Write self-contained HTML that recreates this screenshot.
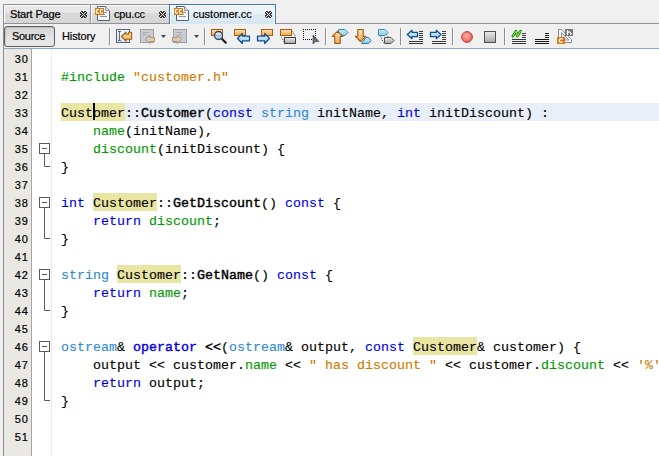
<!DOCTYPE html>
<html><head><meta charset="utf-8">
<style>
*{margin:0;padding:0;box-sizing:border-box}
html,body{width:659px;height:456px;overflow:hidden;background:#f0f0f0;position:relative;font-family:"Liberation Sans",sans-serif}
.abs{position:absolute}
.tab{position:absolute;top:4px;height:20px;border:1px solid #8f9399;border-bottom:1px solid #8f9399;background:linear-gradient(#e9e9e9 0,#e6e6e6 8px,#d9d9d9 8px,#d6d6d6 100%);box-shadow:inset 1px 1px 0 #fff}
.tab .t{position:absolute;top:3px;font-size:11px;color:#000;white-space:nowrap;-webkit-text-stroke:0.2px #000}
.act{border-color:#3b79b6;border-bottom:none;background:linear-gradient(#f0f7fb 0,#eaf3f9 9px,#dcebf4 9px,#d8e8f2 100%);box-shadow:inset 1px 1px 0 #fff,inset -1px 0 0 #fff}
.close{position:absolute;top:7px}
#editor{position:absolute;left:3px;top:48px;width:656px;height:408px;background:#fff;border-left:1px solid #8c8c8c;border-top:1px solid #8aa6c4}
#gutter{position:absolute;left:0;top:0;width:28px;height:408px;background:#e9e8e2;border-right:1px solid #a5a5a5}
.ln{position:absolute;left:0;width:25px;letter-spacing:1px;padding-top:1px;-webkit-text-stroke:0.2px #000;text-align:right;font-family:"Liberation Sans",sans-serif;font-size:11px;line-height:18px;color:#000}
#code{position:absolute;left:57px;top:2px;-webkit-text-stroke:0.12px currentColor;font-family:"Liberation Mono",monospace;font-size:13.333px;line-height:18px;white-space:pre;color:#000}
.row{position:absolute;left:0;height:18px;white-space:pre}
.kw{color:#0000e6}
.ty{color:#2f8ad6}
.gr{color:#009900}
.st{color:#ce7b00}
.b{font-weight:normal;-webkit-text-stroke:0.4px currentColor}
.hl{background:#e9e6a4;display:inline-block;height:18px;padding-top:2px;margin-top:-2px;vertical-align:top}
.sep{position:absolute;top:28px;width:1px;height:17px;background:#8d8d8d;box-shadow:1px 0 0 #fff}
</style></head><body>
<!-- tabs -->
<div class="tab" style="left:3px;width:88px">
  <div class="t" style="left:6px;letter-spacing:-0.15px">Start Page</div>
</div>
<div class="tab" style="left:90px;width:80px;border-right:none;box-shadow:inset 1px 1px 0 #fff,inset -1px 0 0 #fff">
  <div class="t" style="left:23px;letter-spacing:-0.15px">cpu.cc</div>
</div>
<div class="tab act" style="left:169px;width:107px;height:20px">
  <div class="t" style="left:23px">customer.cc</div>
</div>
<div class="abs" style="left:276px;top:23px;width:383px;height:1px;background:#8f9399"></div>

<!-- toolbar -->
<div class="abs" style="left:3px;top:24px;width:1px;height:24px;background:#8c8c8c"></div>
<div class="abs" style="left:4px;top:26px;width:51px;height:21px;border:1px solid #5e5e5e;border-radius:3px;background:linear-gradient(#d4d4d4,#e4e4e4 60%,#e8e8e8);box-shadow:inset 1px 1px 1px rgba(0,0,0,0.12)"></div>
<div class="abs" style="left:12px;top:30px;font-size:11px;letter-spacing:-0.3px;-webkit-text-stroke:0.2px #000">Source</div>
<div class="abs" style="left:62px;top:30px;font-size:11px;letter-spacing:-0.1px;-webkit-text-stroke:0.2px #000">History</div>
<div class="sep" style="left:109px"></div>
<div class="sep" style="left:204px"></div>
<div class="sep" style="left:325px"></div>
<div class="sep" style="left:400px"></div>
<div class="sep" style="left:452px"></div>
<div class="sep" style="left:504px"></div>

<svg class="abs" style="left:0;top:0;z-index:3" width="659" height="48" viewBox="0 0 659 48">
<defs>
<linearGradient id="gOr" x1="0" y1="0" x2="0" y2="1"><stop offset="0" stop-color="#fde3b8"/><stop offset="1" stop-color="#f2a64e"/></linearGradient>
<linearGradient id="gBl" x1="0" y1="0" x2="0" y2="1"><stop offset="0" stop-color="#e6f4fd"/><stop offset="1" stop-color="#8cc6ee"/></linearGradient>
<linearGradient id="gTag" x1="0" y1="0" x2="0" y2="1"><stop offset="0" stop-color="#c8ecf8"/><stop offset="1" stop-color="#88cce6"/></linearGradient>
<linearGradient id="gGr" x1="0" y1="0" x2="0" y2="1"><stop offset="0" stop-color="#ececec"/><stop offset="1" stop-color="#a6a6a6"/></linearGradient>
<linearGradient id="gBox" x1="0" y1="0" x2="0" y2="1"><stop offset="0" stop-color="#eef4fb"/><stop offset="1" stop-color="#d4e2f1"/></linearGradient>
<radialGradient id="gRed" cx="0.45" cy="0.4" r="0.6"><stop offset="0" stop-color="#ffb0a8"/><stop offset="1" stop-color="#ee5e56"/></radialGradient>
</defs>
<!-- tab close icons -->
<g shape-rendering="crispEdges"><path d="M81 11h1v1h-1zM82 11h1v1h-1zM84 11h1v1h-1zM85 11h1v1h-1zM80 12h1v1h-1zM82 12h1v1h-1zM83 12h1v1h-1zM84 12h1v1h-1zM86 12h1v1h-1zM80 13h1v1h-1zM81 13h1v1h-1zM83 13h1v1h-1zM85 13h1v1h-1zM86 13h1v1h-1zM81 14h1v1h-1zM82 14h1v1h-1zM84 14h1v1h-1zM85 14h1v1h-1zM80 15h1v1h-1zM81 15h1v1h-1zM83 15h1v1h-1zM85 15h1v1h-1zM86 15h1v1h-1zM80 16h1v1h-1zM82 16h1v1h-1zM83 16h1v1h-1zM84 16h1v1h-1zM86 16h1v1h-1zM81 17h1v1h-1zM82 17h1v1h-1zM84 17h1v1h-1zM85 17h1v1h-1z" fill="#383838"/><path d="M81 12h1v1h-1zM85 12h1v1h-1zM82 13h1v1h-1zM84 13h1v1h-1zM83 14h1v1h-1zM82 15h1v1h-1zM84 15h1v1h-1zM81 16h1v1h-1zM85 16h1v1h-1z" fill="#e6e6e6"/><path d="M160 11h1v1h-1zM161 11h1v1h-1zM163 11h1v1h-1zM164 11h1v1h-1zM159 12h1v1h-1zM161 12h1v1h-1zM162 12h1v1h-1zM163 12h1v1h-1zM165 12h1v1h-1zM159 13h1v1h-1zM160 13h1v1h-1zM162 13h1v1h-1zM164 13h1v1h-1zM165 13h1v1h-1zM160 14h1v1h-1zM161 14h1v1h-1zM163 14h1v1h-1zM164 14h1v1h-1zM159 15h1v1h-1zM160 15h1v1h-1zM162 15h1v1h-1zM164 15h1v1h-1zM165 15h1v1h-1zM159 16h1v1h-1zM161 16h1v1h-1zM162 16h1v1h-1zM163 16h1v1h-1zM165 16h1v1h-1zM160 17h1v1h-1zM161 17h1v1h-1zM163 17h1v1h-1zM164 17h1v1h-1z" fill="#383838"/><path d="M160 12h1v1h-1zM164 12h1v1h-1zM161 13h1v1h-1zM163 13h1v1h-1zM162 14h1v1h-1zM161 15h1v1h-1zM163 15h1v1h-1zM160 16h1v1h-1zM164 16h1v1h-1z" fill="#e6e6e6"/><path d="M266 11h1v1h-1zM267 11h1v1h-1zM269 11h1v1h-1zM270 11h1v1h-1zM265 12h1v1h-1zM267 12h1v1h-1zM268 12h1v1h-1zM269 12h1v1h-1zM271 12h1v1h-1zM265 13h1v1h-1zM266 13h1v1h-1zM268 13h1v1h-1zM270 13h1v1h-1zM271 13h1v1h-1zM266 14h1v1h-1zM267 14h1v1h-1zM269 14h1v1h-1zM270 14h1v1h-1zM265 15h1v1h-1zM266 15h1v1h-1zM268 15h1v1h-1zM270 15h1v1h-1zM271 15h1v1h-1zM265 16h1v1h-1zM267 16h1v1h-1zM268 16h1v1h-1zM269 16h1v1h-1zM271 16h1v1h-1zM266 17h1v1h-1zM267 17h1v1h-1zM269 17h1v1h-1zM270 17h1v1h-1z" fill="#383838"/><path d="M266 12h1v1h-1zM270 12h1v1h-1zM267 13h1v1h-1zM269 13h1v1h-1zM268 14h1v1h-1zM267 15h1v1h-1zM269 15h1v1h-1zM266 16h1v1h-1zM270 16h1v1h-1z" fill="#eef5fa"/></g>
<!-- tab file icons -->
<g id="ccicon">
<path d="M97.5 6.5H105.5L109.5 10.5V20.5H97.5Z" fill="#f4f8fc" stroke="#56606c" stroke-width="1"/>
<path d="M105.5 6.5V10.5H109.5" fill="#dfe6ee" stroke="#8d96a0" stroke-width="1"/>
<path d="M104 12.5h3M104 14.5h1M100 16.5h7" stroke="#8c96a2" stroke-width="1"/>
<rect x="95" y="8" width="9" height="7" fill="#d9780c"/>
<path d="M99 9.6H97.2Q96.4 9.6 96.4 10.5V12.1Q96.4 13.1 97.2 13.1H99M103 9.6H101.2Q100.4 9.6 100.4 10.5V12.1Q100.4 13.1 101.2 13.1H103" stroke="#fff" stroke-width="1.25" fill="none"/>
</g>
<use href="#ccicon" x="79"/>
<!-- icon1 last edit -->
<rect x="116.5" y="29.5" width="13" height="13" fill="url(#gBox)" stroke="#56616d"/>
<path d="M118 31.5h3M119.5 31.5v9M118 40.5h3" stroke="#56606b" stroke-width="0.9" fill="none"/>
<path d="M121.5 36.5L126 32.2V34.3H128.6V32.2H131.6V39.2H126V41L121.5 36.5Z" fill="url(#gOr)" stroke="#a55d0c" stroke-width="1.1" stroke-linejoin="round"/>
<!-- icon2 back disabled -->
<rect x="140.5" y="29.5" width="13" height="13" fill="#c9cdd2" stroke="#9da2a7"/>
<path d="M143 32.5h6M143 34.5h3M143 36.5h1" stroke="#a8adb3"/>
<path d="M145.3 39.4L149.7 35.2V37.4H154.5V41.5H149.7V43.6Z" fill="#d9ccb6" stroke="#aa9476" stroke-linejoin="round"/>
<path d="M161 35H166L163.5 38Z" fill="#3b4757"/>
<!-- icon3 forward disabled -->
<rect x="173.5" y="29.5" width="13" height="13" fill="#c9cdd2" stroke="#9da2a7"/>
<path d="M176 32.5h6M179 34.5h3M181 36.5h1" stroke="#a8adb3"/>
<path d="M181.7 39.4L177.3 35.2V37.4H172.5V41.5H177.3V43.6Z" fill="#d9ccb6" stroke="#aa9476" stroke-linejoin="round"/>
<path d="M194 35H199L196.5 38Z" fill="#3b4757"/>
<!-- icon5 find -->
<rect x="211.5" y="29.5" width="11" height="6" fill="url(#gOr)" stroke="#a65d0e"/>
<path d="M221.3 38.3L225.8 42.8" stroke="#1e1e1e" stroke-width="2.2" stroke-linecap="round"/>
<circle cx="218.5" cy="35.5" r="4" fill="url(#gBl)" stroke="#3c4248" stroke-width="1.3"/>
<path d="M215.5 35.5h6" stroke="#b8a898" stroke-width="0.8"/>
<!-- icon6 find prev -->
<rect x="234.5" y="29.5" width="11" height="6" fill="url(#gOr)" stroke="#a65d0e"/>
<path d="M237.5 38.5L242.3 33.5V36.2H249.5V40.8H242.3V43.5Z" fill="url(#gBl)" stroke="#0f4f8f" stroke-width="1.25" stroke-linejoin="round"/>
<!-- icon7 find next -->
<rect x="261.5" y="29.5" width="11" height="6" fill="url(#gOr)" stroke="#a65d0e"/>
<path d="M269.5 38.5L264.7 33.5V36.2H257.5V40.8H264.7V43.5Z" fill="url(#gBl)" stroke="#0f4f8f" stroke-width="1.25" stroke-linejoin="round"/>
<!-- icon8 -->
<rect x="280.5" y="29.5" width="11" height="6" fill="url(#gOr)" stroke="#a65d0e"/>
<rect x="284.5" y="37.5" width="11" height="6" fill="url(#gGr)" stroke="#3e3e3e"/>
<path d="M292.5 31.5L295.5 36.5M281.5 37.5L284.5 42.5" stroke="#333" stroke-dasharray="1 1"/>
<!-- icon9 rect select -->
<path d="M303 29h1v1h-1zM303 39h1v1h-1zM305 29h1v1h-1zM305 39h1v1h-1zM307 29h1v1h-1zM307 39h1v1h-1zM309 29h1v1h-1zM309 39h1v1h-1zM311 29h1v1h-1zM311 39h1v1h-1zM313 29h1v1h-1zM313 39h1v1h-1zM315 29h1v1h-1zM315 39h1v1h-1zM303 31h1v1h-1zM315 31h1v1h-1zM303 33h1v1h-1zM315 33h1v1h-1zM303 35h1v1h-1zM315 35h1v1h-1zM303 37h1v1h-1zM315 37h1v1h-1z" fill="#111"/>
<path d="M313 35V44L315.2 41.8L319 41.5Z" fill="#5d6c7b" stroke="#3a4652" stroke-width="0.6" stroke-linejoin="round"/>
<!-- icon11 prev bookmark -->
<path d="M338.5 29.5H345L348 32.5L345 35.5H338.5Z" fill="url(#gTag)" stroke="#3a8cb2" stroke-linejoin="round"/>
<path d="M337.5 31.3L342.8 36.5H340.2V43.5H334.8V36.5H332.2Z" fill="url(#gOr)" stroke="#9c5a10" stroke-width="1.1" stroke-linejoin="round"/>
<!-- icon12 next bookmark -->
<path d="M360.5 41.5L365.8 36.2H363.2V29.5H357.8V36.2H355.2Z" fill="url(#gOr)" stroke="#9c5a10" stroke-width="1.1" stroke-linejoin="round"/>
<path d="M361.5 43.5L366 37.5H368.5L371 40.5L368.5 43.5Z" fill="url(#gTag)" stroke="#2f7a98" stroke-linejoin="round"/>
<!-- icon13 toggle bookmark -->
<path d="M378.5 29.5H385L388 32.5L385 35.5H378.5Z" fill="url(#gTag)" stroke="#3a8cb2" stroke-linejoin="round"/>
<path d="M384.5 37.5H391L394 40.5L391 43.5H384.5Z" fill="url(#gGr)" stroke="#555" stroke-linejoin="round"/>
<path d="M386.5 34.5L388.5 37.5M380.5 36.5L383.5 42.5" stroke="#444" stroke-dasharray="1 1"/>
<!-- icon15 shift left -->
<path d="M407.3 34.5L412 30.3V32.3H417.5V36.7H412V38.7Z" fill="url(#gBl)" stroke="#0f4f8f" stroke-width="1.25" stroke-linejoin="round"/>
<path d="M419 31.5h4M419 33.5h4M419 35.5h4M419 37.5h4M419 39.5h4M409 41.5h14M409 43.5h14" stroke="#383838" stroke-width="1"/>
<!-- icon16 shift right -->
<path d="M441 34.5L436.3 30.3V32.3H430.5V36.7H436.3V38.7Z" fill="url(#gBl)" stroke="#0f4f8f" stroke-width="1.25" stroke-linejoin="round"/>
<path d="M442 31.5h4M442 33.5h4M442 35.5h4M442 37.5h4M442 39.5h4M432 41.5h14M432 43.5h14" stroke="#383838" stroke-width="1"/>
<!-- icon18 record -->
<circle cx="467" cy="37" r="5.4" fill="url(#gRed)" stroke="#b4433d" stroke-width="1"/>
<!-- icon19 stop -->
<rect x="484.5" y="31.5" width="11" height="11" fill="url(#gGr)" stroke="#505050"/>
<!-- icon21 comment -->
<path d="M512.8 36.3L516 31.2L517.3 36.3L520.5 31.2" fill="none" stroke="#1e8a0a" stroke-width="2.6" stroke-linecap="round" stroke-linejoin="round"/>
<path d="M512.8 36.3L516 31.2L517.3 36.3L520.5 31.2" fill="none" stroke="#b6f07a" stroke-width="0.9" stroke-linecap="round" stroke-linejoin="round"/>
<path d="M522 33.5h4M522 35.5h4M522 37.5h4M512 39.5h14M512 41.5h14M512 43.5h14" stroke="#383838" stroke-width="1"/>
<!-- icon22 uncomment -->
<path d="M545 33.5h4M545 35.5h4M545 37.5h4M535 39.5h14M535 41.5h14M535 43.5h14" stroke="#151515" stroke-width="1"/>
<!-- icon23 header/source -->
<path d="M558.5 29.5H561.5L571.5 39.5V42.5H558.5Z" fill="#f4f7fa" stroke="#7d8a98" stroke-linejoin="round"/>
<path d="M561.5 32.5L569 40H561.5Z" fill="#d6e4f2" stroke="#8b97a5" stroke-linejoin="round"/>
<rect x="565" y="29" width="8" height="7" fill="#767676"/>
<path d="M567.5 30.2V35M567.5 32.8Q568.2 31.8 569.4 31.9Q570.8 32.1 570.8 33.4V35" stroke="#fff" stroke-width="1.3" fill="none"/>
<rect x="557" y="37" width="8" height="7" fill="#d9780c"/>
<path d="M562.8 38.8H560.6Q559.3 38.8 559.3 40.1V40.9Q559.3 42.2 560.6 42.2H562.8" stroke="#fff" stroke-width="1.3" fill="none"/>
</svg>

<!-- editor -->
<svg class="abs" style="left:0;top:0;z-index:4" width="60" height="456" viewBox="0 0 60 456"><rect x="39.5" y="143.5" width="10" height="10" fill="#fff" stroke="#5a5a5a"/><path d="M42 148.5h5" stroke="#5a5a5a"/><path d="M44.5 154 V166.5 H50" fill="none" stroke="#5a5a5a"/><rect x="39.5" y="197.5" width="10" height="10" fill="#fff" stroke="#5a5a5a"/><path d="M42 202.5h5" stroke="#5a5a5a"/><path d="M44.5 208 V238.5 H50" fill="none" stroke="#5a5a5a"/><rect x="39.5" y="269.5" width="10" height="10" fill="#fff" stroke="#5a5a5a"/><path d="M42 274.5h5" stroke="#5a5a5a"/><path d="M44.5 280 V310.5 H50" fill="none" stroke="#5a5a5a"/><rect x="39.5" y="341.5" width="10" height="10" fill="#fff" stroke="#5a5a5a"/><path d="M42 346.5h5" stroke="#5a5a5a"/><path d="M44.5 352 V400.5 H50" fill="none" stroke="#5a5a5a"/></svg>
<div id="editor" style="z-index:1">
  <div id="gutter"></div>
  <div class="abs" style="left:47px;top:0;width:1px;height:408px;background:#ededed"></div>
  <div class="abs" style="left:57px;top:54px;width:599px;height:18px;background:#e9eff8"></div>
  <div class="abs" style="left:89px;top:54px;width:2px;height:17px;background:#000;z-index:5"></div>
<div id="lns">
<div class="ln" style="top:0px">30</div>
<div class="ln" style="top:18px">31</div>
<div class="ln" style="top:36px">32</div>
<div class="ln" style="top:54px">33</div>
<div class="ln" style="top:72px">34</div>
<div class="ln" style="top:90px">35</div>
<div class="ln" style="top:108px">36</div>
<div class="ln" style="top:126px">37</div>
<div class="ln" style="top:144px">38</div>
<div class="ln" style="top:162px">39</div>
<div class="ln" style="top:180px">40</div>
<div class="ln" style="top:198px">41</div>
<div class="ln" style="top:216px">42</div>
<div class="ln" style="top:234px">43</div>
<div class="ln" style="top:252px">44</div>
<div class="ln" style="top:270px">45</div>
<div class="ln" style="top:288px">46</div>
<div class="ln" style="top:306px">47</div>
<div class="ln" style="top:324px">48</div>
<div class="ln" style="top:342px">49</div>
<div class="ln" style="top:360px">50</div>
<div class="ln" style="top:378px">51</div>
</div>
  <div id="code">
<div class="row" style="top:0px"></div>
<div class="row" style="top:18px"><span class="gr">#include</span> <span class="st">"customer.h"</span></div>
<div class="row" style="top:36px"></div>
<div class="row" style="top:54px"><span class="hl">Customer</span>::<span class="b">Customer</span>(<span class="kw">const</span> <span class="ty">string</span> initName, <span class="kw">int</span> initDiscount) :</div>
<div class="row" style="top:72px">    <span class="gr">name</span>(initName),</div>
<div class="row" style="top:90px">    <span class="gr">discount</span>(initDiscount) {</div>
<div class="row" style="top:108px">}</div>
<div class="row" style="top:126px"></div>
<div class="row" style="top:144px"><span class="kw">int</span> <span class="hl">Customer</span>::<span class="b">GetDiscount</span>() <span class="kw">const</span> {</div>
<div class="row" style="top:162px">    <span class="kw">return</span> <span class="gr">discount</span>;</div>
<div class="row" style="top:180px">}</div>
<div class="row" style="top:198px"></div>
<div class="row" style="top:216px"><span class="ty">string</span> <span class="hl">Customer</span>::<span class="b">GetName</span>() <span class="kw">const</span> {</div>
<div class="row" style="top:234px">    <span class="kw">return</span> <span class="gr">name</span>;</div>
<div class="row" style="top:252px">}</div>
<div class="row" style="top:270px"></div>
<div class="row" style="top:288px"><span class="ty">ostream</span>&amp; <span class="kw b">operator</span> <span class="b">&lt;&lt;</span>(<span class="ty">ostream</span>&amp; output, <span class="kw">const</span> <span class="hl">Customer</span>&amp; customer) {</div>
<div class="row" style="top:306px">    output &lt;&lt; customer.<span class="gr">name</span> &lt;&lt; <span class="st">" has discount "</span> &lt;&lt; customer.<span class="gr">discount</span> &lt;&lt; <span class="st">'%'</span> &lt;&lt; endl;</div>
<div class="row" style="top:324px">    <span class="kw">return</span> output;</div>
<div class="row" style="top:342px">}</div>
<div class="row" style="top:360px"></div>
<div class="row" style="top:378px"></div>
</div>
</div>
</body></html>
